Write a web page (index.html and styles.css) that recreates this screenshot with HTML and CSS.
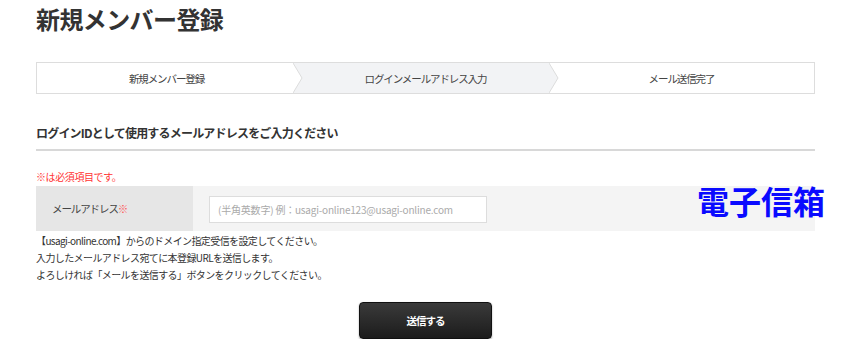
FILE: index.html
```html
<!DOCTYPE html>
<html lang="ja">
<head>
    <meta charset="UTF-8">
    <meta name="viewport" content="width=device-width, initial-scale=1.0">
    <title>新規メンバー登録</title>
    <link rel="stylesheet" href="styles.css">
</head>

<body>
    <div class="page">
        <h1 class="page-title">新規メンバー登録</h1>

        <!-- progress steps -->
        <ol class="steps">
            <li class="step"><span class="step-text">新規メンバー登録</span></li>
            <li class="step current">
                <svg class="chev chev-left" viewBox="0 0 10 30" preserveAspectRatio="none"><polyline points="0,0 9,15 0,30" /></svg>
                ログインメールアドレス入力
                <svg class="chev chev-right" viewBox="0 0 10 30" preserveAspectRatio="none"><polyline points="0,0 9,15 0,30" /></svg>
            </li>
            <li class="step">メール送信完了</li>
        </ol>

        <h2 class="section-title">ログインIDとして使用するメールアドレスをご入力ください</h2>

        <form id="register-form" action="/send-mail" method="POST">
            <p class="required-note">※は必須項目です。</p>

            <div class="form-row">
                <label class="form-label" for="email">メールアドレス<span class="mark">※</span></label>
                <div class="form-field">
                    <input type="email" id="email" name="email" placeholder="(半角英数字) 例：usagi-online123@usagi-online.com" required>
                </div>
                <span class="badge">電子信箱</span>
            </div>

            <div class="notes">
                <p>【usagi-online.com】からのドメイン指定受信を設定してください。</p>
                <p>入力したメールアドレス宛てに本登録URLを送信します。</p>
                <p>よろしければ「メールを送信する」ボタンをクリックしてください。</p>
            </div>

            <div class="button-container">
                <button type="submit" class="submit-button">送信する</button>
            </div>
        </form>
    </div>
</body>
</html>
```

FILE: styles.css
```css
body {
    font-family: "Noto Sans CJK JP", "Noto Sans", sans-serif;
    margin: 0;
    background-color: #fff;
    color: #333;
}

.page {
    width: 779px;
    margin-left: 36px;
}

.page-title {
    font-size: 24px;
    line-height: 30px;
    letter-spacing: -0.6px;
    margin: 4px 0 0;
    color: #333;
}

/* steps */
.steps {
    list-style: none;
    display: flex;
    height: 30px;
    margin: 28px 0 0;
    padding: 0;
    border: 1px solid #ddd;
}

.step {
    flex: 1;
    position: relative;
    isolation: isolate;
    display: flex;
    align-items: center;
    justify-content: center;
    font-size: 10.5px;
    letter-spacing: -1.1px;
    color: #444;
}

.step-text {
    margin-right: 6px;
}

.step.current {
    margin-left: -9px;
    margin-right: -9px;
}

.step.current::before {
    content: "";
    position: absolute;
    inset: 0;
    z-index: -1;
    background-color: #f2f3f5;
    clip-path: polygon(0 0, calc(100% - 9px) 0, 100% 50%, calc(100% - 9px) 100%, 0 100%, 9px 50%);
}

.chev {
    position: absolute;
    top: 0;
    width: 10px;
    height: 100%;
    fill: none;
    stroke: #ddd;
    stroke-width: 1;
}

.chev-left {
    left: 0;
}

.chev-right {
    right: -1px;
}

/* section */
.section-title {
    font-size: 12px;
    line-height: 20px;
    letter-spacing: -0.8px;
    margin: 29px 0 0;
    padding-bottom: 6px;
    border-bottom: 2px solid #d8d8d8;
    color: #333;
}

.required-note {
    font-size: 10px;
    line-height: 16px;
    letter-spacing: -0.4px;
    color: #f33;
    margin: 18px 0 1px;
}

.form-row {
    position: relative;
    display: flex;
    height: 45px;
    background-color: #f4f4f4;
}

.form-label {
    width: 141px;
    padding-left: 16px;
    display: flex;
    align-items: center;
    background-color: #e6e6e6;
    font-size: 10.5px;
    letter-spacing: -1.1px;
    color: #444;
}

.form-label .mark {
    color: #f55;
}

.form-field {
    padding: 9px 16px;
}

.form-field input {
    box-sizing: border-box;
    width: 278px;
    height: 27px;
    padding: 0 8px;
    font-family: inherit;
    font-size: 10px;
    letter-spacing: -0.2px;
    border: 1px solid #ddd;
    background-color: #fff;
    border-radius: 0;
}

.form-field input::placeholder {
    color: #aaa;
}

.badge {
    position: absolute;
    left: 661px;
    top: -2px;
    font-family: "Noto Sans CJK TC", sans-serif;
    font-size: 32px;
    line-height: 1;
    font-weight: bold;
    color: #0a0aff;
    white-space: nowrap;
}

.notes {
    margin-top: 1px;
}

.notes p {
    font-size: 10px;
    line-height: 17px;
    letter-spacing: -0.6px;
    margin: 0;
    color: #333;
}

.button-container {
    text-align: center;
    margin-top: 19px;
}

.submit-button {
    width: 133px;
    height: 37px;
    font-family: inherit;
    font-size: 10.5px;
    font-weight: bold;
    letter-spacing: -1px;
    color: #fff;
    background: linear-gradient(#3a3a3a, #1c1c1c);
    border: 1px solid #111;
    border-radius: 4px;
    box-shadow: 0 1px 2px rgba(0, 0, 0, 0.35);
    cursor: pointer;
}

.submit-button:hover {
    background: #000;
}
```
